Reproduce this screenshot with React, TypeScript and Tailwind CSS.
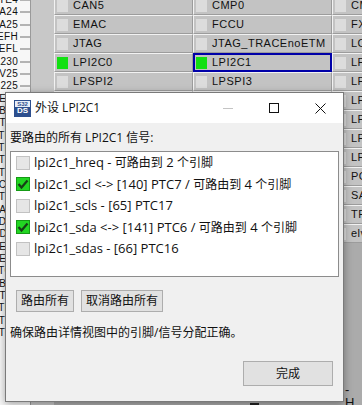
import React from "react";

const col1 = ["CAN5", "EMAC", "JTAG", "LPI2C0", "LPSPI2", "LPSPI4", "LPUART1", "LPUART3", "LPUART5", "MDM", "PORT", "SIUL2", "SWT"];
const col2 = ["CMP0", "FCCU", "JTAG_TRACEnoETM", "LPI2C1", "LPSPI3", "LPSPI5", "LPUART2", "LPUART4", "LPUART6", "PIT", "SAR", "STM", "TRACE"];
const col3 = ["CMU", "FXOSC", "LCU0", "LPUART0", "LPUART7", "LPUART8", "LPUART9", "LPUART10", "LPUART11", "PGOOD", "SAI0", "TRGMUX", "elvdi"];

const pins = ["TE4", "TA24", "TA25", "EFH", "EFL", "A230", "V25", "5225", "PTE12", "PTB32", "PTA7", "PTD0", "PTD1", "PTE2", "PTE3", "PTC12", "PTB2", "PTA17", "PTD10", "PTD11", "PTE22", "PTE23", "PTC1", "PTB13", "PTA1", "PTD2", "PTE8", "PTE9"];

function Cell({ label, on, sel }: { label: string; on?: boolean; sel?: boolean }) {
  return (
    <div className="relative flex h-[19px] items-center border-t border-l border-r border-b border-t-[#f2f2f2] border-l-[#f2f2f2] border-r-[#9c9c9c] border-b-[#9c9c9c] bg-[#c3c3c3] pl-[2px]">
      {on ? (
        <div className="h-[12px] w-[11px] shrink-0 bg-[#12e012]" />
      ) : (
        <div className="h-[12px] w-[11px] shrink-0 bg-[#dcdcdc]" />
      )}
      <span className="ml-[5px] whitespace-nowrap font-['Liberation_Sans',sans-serif] text-[11px] leading-none tracking-[0.5px] text-[#111]">
        {label}
      </span>
      {sel ? <div className="absolute inset-[-1px] border-2 border-[#0000a8]" /> : null}
    </div>
  );
}

function Check({ on }: { on?: boolean }) {
  if (on) {
    return (
      <div className="flex h-[14px] w-[14px] shrink-0 items-center justify-center border border-[#159a15] bg-[#22d622]">
        <svg width="12" height="12" viewBox="0 0 12 12">
          <polyline points="1.5,6 4.5,9.5 10.5,2.5" fill="none" stroke="#173f17" strokeWidth="2.2" />
        </svg>
      </div>
    );
  }
  return <div className="h-[14px] w-[14px] shrink-0 border border-[#c2c2c2] bg-[#e6e6e6]" />;
}

type Seg = [string, boolean];
const items: { on: boolean; segs: Seg[] }[] = [
  { on: false, segs: [["lpi2c1_hreq - ", false], ["可路由到", true], [" 2 ", false], ["个引脚", true]] },
  { on: true, segs: [["lpi2c1_scl <-> [140] PTC7 / ", false], ["可路由到", true], [" 4 ", false], ["个引脚", true]] },
  { on: false, segs: [["lpi2c1_scls - [65] PTC17", false]] },
  { on: true, segs: [["lpi2c1_sda <-> [141] PTC6 / ", false], ["可路由到", true], [" 4 ", false], ["个引脚", true]] },
  { on: false, segs: [["lpi2c1_sdas - [66] PTC16", false]] },
];

export default function App() {
  return (
    <div className="relative h-[405px] w-[362px] overflow-hidden bg-[#ababab]">
      <div className="flex h-full">
        {/* pin labels */}
        <div className="flex w-[30px] shrink-0 flex-col bg-[#f7f7f7]">
          <div className="-mt-[6px] flex flex-col">
            {pins.map((p, i) => (
              <div key={i} className="flex h-[12.33px] items-center">
                <div className="flex w-[18px] justify-end">
                  <span className="whitespace-nowrap font-['Liberation_Sans',sans-serif] text-[10px] leading-none tracking-[0.3px] text-[#111]">{p}</span>
                </div>
                <div className="ml-[2px] h-[2px] w-[10px] bg-[#b4b4b4]" />
              </div>
            ))}
          </div>
        </div>
        {/* chip body */}
        <div className="w-[24px] shrink-0 border-l border-[#9a9a9a] bg-[#c8c8c8]" />
        {/* peripheral grid */}
        <div className="-mt-[4px] grid h-[247px] grid-cols-[139px_139px_1fr] content-start bg-[#c8c8c8]">
          {col1.map((c, i) => (
            <React.Fragment key={i}>
              <Cell label={c} on={c === "LPI2C0"} />
              <Cell label={col2[i]} on={col2[i] === "LPI2C1"} sel={col2[i] === "LPI2C1"} />
              <Cell label={col3[i]} />
            </React.Fragment>
          ))}
        </div>
      </div>

      <span className="absolute left-[345px] top-[383px] font-['Liberation_Sans',sans-serif] text-[13px] leading-none text-[#111]">- H</span>
      <div className="absolute left-[250px] top-[403px] h-[2px] w-[9px] bg-[#222]" />

      {/* dialog */}
      <div className="absolute left-[5px] top-[92px] flex h-[310px] w-[339px] flex-col border border-[#7a7a7a] bg-[#f0f0f0] font-['Open_Sans','Noto_Sans_CJK_SC',sans-serif] text-[#111] shadow-[0_2px_8px_rgba(0,0,0,0.35)]">
        <div className="flex h-[30px] shrink-0 items-center bg-white">
          <div className="ml-[8px] flex h-[17px] w-[17px] flex-col overflow-hidden border border-[#2d4f8e] bg-[#2d4f8e]">
            <div className="flex h-[6px] items-center justify-center bg-[#e8eef8] font-['Liberation_Sans',sans-serif] text-[6px] font-bold leading-none text-[#2d4f8e]">S32</div>
            <div className="flex flex-1 items-center justify-center font-['Liberation_Sans',sans-serif] text-[8px] font-bold leading-none text-white">DS</div>
          </div>
          <span className="ml-[4px] text-[12px] leading-none">外设 LPI2C1</span>
          <div className="ml-auto flex h-full">
            <div className="flex h-full w-[46px] items-center justify-center">
              <div className="h-px w-[10px] bg-[#c4c4c4]" />
            </div>
            <div className="flex h-full w-[46px] items-center justify-center">
              <div className="h-[10px] w-[10px] border border-[#111]" />
            </div>
            <div className="flex h-full w-[46px] items-center justify-center">
              <svg width="11" height="11" viewBox="0 0 11 11">
                <path d="M0.5 0.5 L10.5 10.5 M10.5 0.5 L0.5 10.5" stroke="#111" strokeWidth="1" />
              </svg>
            </div>
          </div>
        </div>

        <div className="flex flex-1 flex-col px-[4px] pb-[15px]">
          <div className="mt-[8px] text-[12px] leading-[14px]">要路由的所有 LPI2C1 信号:</div>
          <div className="mt-[6px] flex h-[126px] flex-col border border-[#8c8c8c] bg-white pl-[5px]">
            {items.map((it, i) => (
              <div key={i} className="flex h-[21.5px] items-center">
                <Check on={it.on} />
                <span className="ml-[4px] whitespace-nowrap text-[13px] leading-none">
                  {it.segs.map((s, j) =>
                    s[1] ? (
                      <span key={j} className="text-[12px]">{s[0]}</span>
                    ) : (
                      <span key={j}>{s[0]}</span>
                    )
                  )}
                </span>
              </div>
            ))}
          </div>
          <div className="mt-[13px] flex gap-[7px] pl-[6px]">
            <div className="flex h-[22px] w-[58px] items-center justify-center border border-[#adadad] bg-[#e1e1e1] text-[12px] leading-none">路由所有</div>
            <div className="flex h-[22px] w-[82px] items-center justify-center border border-[#adadad] bg-[#e1e1e1] text-[12px] leading-none">取消路由所有</div>
          </div>
          <div className="mt-[14px] text-[12px] leading-[14px]">确保路由详情视图中的引脚/信号分配正确。</div>
          <div className="mt-auto flex justify-end pr-[6px]">
            <div className="flex h-[25px] w-[90px] items-center justify-center border border-[#adadad] bg-[#e1e1e1] text-[12px] leading-none">完成</div>
          </div>
        </div>
      </div>
    </div>
  );
}
